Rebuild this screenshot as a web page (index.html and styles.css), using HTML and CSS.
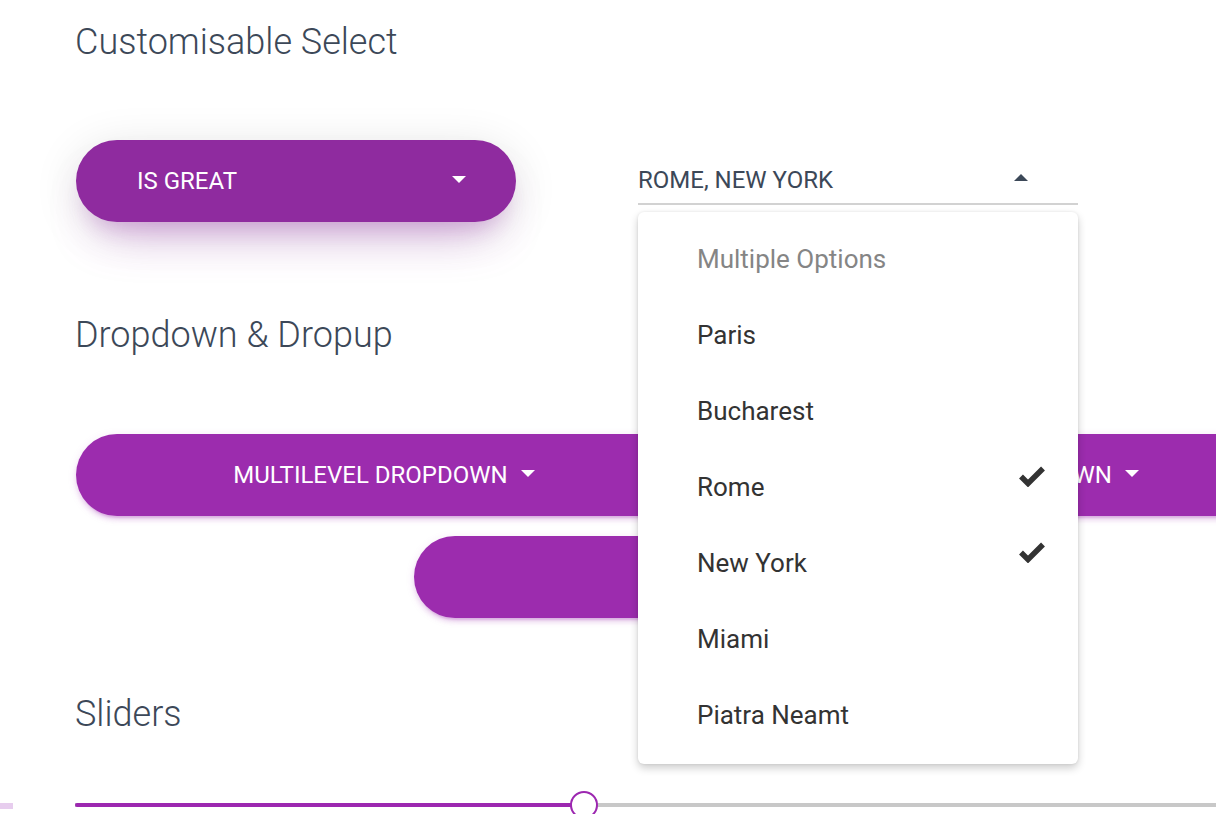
FILE: index.html
```html
<!DOCTYPE html>
<html lang="en">
<head>
<meta charset="utf-8">
<title>Components</title>
<link rel="stylesheet" href="styles.css">
</head>
<body>
<div class="page">
  <h3 class="title title-first">Customisable Select</h3>

  <div class="select-row">
    <div class="col">
      <button class="btn btn-open"><span class="btn-label">IS GREAT</span><span class="caret"></span></button>
    </div>
    <div class="col">
      <div class="select-field">
        <div class="select-toggle"><span class="select-value">ROME, NEW YORK</span><span class="caret caret-up"></span></div>
        <ul class="menu">
          <li class="menu-item menu-header"><span>Multiple Options</span></li>
          <li class="menu-item"><span>Paris</span></li>
          <li class="menu-item"><span>Bucharest</span></li>
          <li class="menu-item selected"><span>Rome</span>
            <svg class="check" width="28" height="22" viewBox="0 0 28 22"><polyline points="3,11.5 10,18.5 25,3.5" fill="none" stroke="#333" stroke-width="5.5"/></svg>
          </li>
          <li class="menu-item selected"><span>New York</span>
            <svg class="check" width="28" height="22" viewBox="0 0 28 22"><polyline points="3,11.5 10,18.5 25,3.5" fill="none" stroke="#333" stroke-width="5.5"/></svg>
          </li>
          <li class="menu-item"><span>Miami</span></li>
          <li class="menu-item"><span>Piatra Neamt</span></li>
        </ul>
      </div>
    </div>
  </div>

  <h3 class="title title-second">Dropdown &amp; Dropup</h3>

  <div class="dd-row">
    <button class="btn btn-center btn-multi"><span>MULTILEVEL DROPDOWN</span><span class="caret"></span></button>
    <button class="btn btn-center btn-regular"><span>REGULAR DROPDOWN</span><span class="caret"></span></button>
  </div>
  <div class="dd-row2">
    <button class="btn btn-center btn-dropup" aria-label="Dropup"></button>
  </div>

  <h3 class="title title-third">Sliders</h3>

  <div class="slider-row">
    <div class="stub"></div>
    <div class="track">
      <div class="fill" style="width: 509px"></div>
      <div class="thumb" style="left: 495px"></div>
    </div>
  </div>
</div>
</body>
</html>
```

FILE: styles.css
```css
html, body {
  margin: 0;
  padding: 0;
  overflow: hidden;
  background: #fff;
}

body {
  font-family: Roboto, "Noto Sans", "Liberation Sans", sans-serif;
  width: 1216px;
  height: 814px;
}

.page {
  width: 1320px;
  padding-top: 21px;
}

.title {
  margin: 0 0 0 75px;
  font-size: 36px;
  line-height: 43px;
  font-weight: 300;
  color: #3c4858;
}

.title-second { margin-top: 92px; }
.title-third { margin-top: 75px; }

.select-row {
  display: flex;
  gap: 122px;
  margin: 76px 0 0 76px;
}

.col {
  width: 440px;
}

.btn {
  display: flex;
  align-items: center;
  box-sizing: border-box;
  height: 82px;
  border: 0;
  border-radius: 41px;
  background: #9c2cae;
  color: #fff;
  font-family: Roboto, "Noto Sans", "Liberation Sans", sans-serif;
  font-size: 24px;
  font-weight: 400;
  padding: 0;
  margin: 0;
}

.btn-open {
  width: 440px;
  background: #8f2b9f;
  padding: 0 50px 0 61px;
  box-shadow: 0 28px 52px -24px rgba(156, 39, 176, 0.42),
              0 8px 46px 0 rgba(0, 0, 0, 0.12),
              0 16px 20px -10px rgba(156, 39, 176, 0.2);
}

.btn-label {
  flex: 1;
  text-align: left;
}

.caret {
  width: 0;
  height: 0;
  border-left: 7px solid transparent;
  border-right: 7px solid transparent;
  border-top: 7px solid #fff;
  margin-top: -4px;
}

.caret-up {
  border-top: 0;
  border-bottom: 7px solid #3c4858;
  margin-top: -4px;
}

.select-field {
  position: relative;
  width: 440px;
}

.select-toggle {
  display: flex;
  align-items: center;
  box-sizing: border-box;
  height: 65px;
  padding: 16px 50px 0 0;
  border-bottom: 2px solid #d2d2d2;
  font-size: 24px;
  color: #3c4858;
}

.select-value {
  flex: 1;
}

.menu {
  position: absolute;
  top: 72px;
  left: 0;
  z-index: 10;
  width: 440px;
  box-sizing: border-box;
  margin: 0;
  padding: 9px 0 11px;
  list-style: none;
  background: #fff;
  border-radius: 6px;
  box-shadow: 0 4px 9px rgba(0, 0, 0, 0.2), 0 0 3px rgba(0, 0, 0, 0.08);
}

.menu-item {
  display: flex;
  align-items: center;
  height: 76px;
  padding: 0 32px 0 59px;
  font-size: 26px;
  color: #333;
}

.menu-item span {
  flex: 1;
}

.menu-header {
  color: #858585;
}

.check {
  margin-top: -22px;
}

.dd-row {
  display: flex;
  gap: 30px;
  margin: 77px 0 0 76px;
}

.btn-center {
  justify-content: center;
  gap: 13px;
  box-shadow: 0 4px 4px 0 rgba(156, 39, 176, 0.14),
              0 6px 2px -4px rgba(156, 39, 176, 0.2),
              0 2px 10px 0 rgba(156, 39, 176, 0.12);
}

.btn-multi { width: 616px; }
.btn-regular { width: 564px; }

.dd-row2 {
  margin: 20px 0 0 414px;
}

.btn-dropup { width: 560px; }

.slider-row {
  display: flex;
  align-items: center;
  gap: 62px;
  margin-top: 67px;
  height: 4px;
}

.stub {
  width: 13px;
  height: 6px;
  margin-top: 2px;
  background: #e7cdee;
}

.track {
  position: relative;
  flex: 1;
  height: 4px;
  background: #c8c8c8;
}

.fill {
  height: 4px;
  background: #9c27b0;
  border-radius: 2px 0 0 2px;
}

.thumb {
  position: absolute;
  top: -12px;
  width: 28px;
  height: 28px;
  box-sizing: border-box;
  border: 2px solid #9c27b0;
  border-radius: 50%;
  background: #fff;
}
```
